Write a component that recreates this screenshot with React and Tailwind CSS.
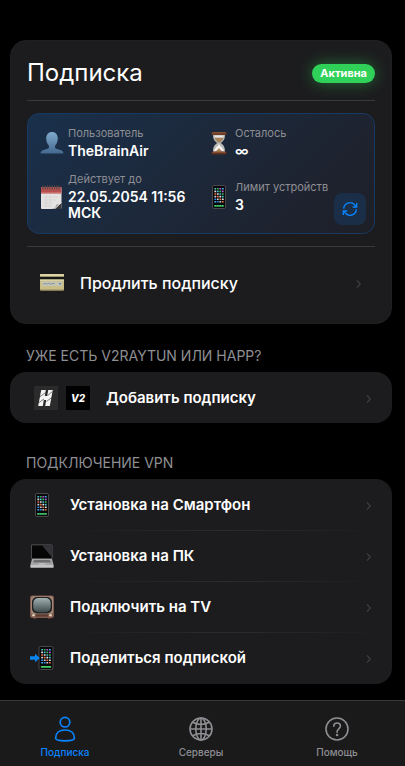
// App.jsx
import React, { useState } from "react";

const UserEmoji = () => (
	<svg viewBox="0 0 24 24" className="h-6 w-6">
		<defs>
			<linearGradient id="bust" x1="0" y1="0" x2="0" y2="1">
				<stop offset="0" stopColor="#7fa9cc" />
				<stop offset="1" stopColor="#45698f" />
			</linearGradient>
		</defs>
		<path
			d="M12 1c3.600 0 5.800 2.700 5.800 6.600 0 2.900-1.100 5.500-2.700 7v1.600c0 1 .8 1.500 2 1.900l4 1.200c1.500.5 2.300 1.500 2.300 3.200H.6c0-1.700.8-2.700 2.300-3.200l4-1.200c1.200-.4 2-.9 2-1.900v-1.600c-1.600-1.500-2.700-4.100-2.700-7C6.200 3.700 8.400 1 12 1z"
			fill="url(#bust)"
		/>
	</svg>
);

const CalendarEmoji = () => (
	<svg viewBox="0 0 24 24" className="h-6 w-6">
		<rect x="1" y="2" width="20.500" height="22" rx="1" fill="#e4e3e1" />
		<rect x="1" y="2" width="20.500" height="6.500" fill="#b5504f" />
		<path d="M1 8h20.500" stroke="#d98a88" strokeWidth="1" />
		<path d="M3 0.500v4M5.300 0.500v4M7.600 0.500v4M9.900 0.500v4M12.200 0.500v4M14.500 0.500v4M16.800 0.500v4M19 0.500v4" stroke="#5b4a4a" strokeWidth="1.100" />
		<path d="M4 12h14M4 15h12M4 18h9M4 21h8M6 10v12M10 10v12" stroke="#d2d0ce" strokeWidth="0.6" />
		<path d="M12 24c3-1 4-2 4.500-4.500 2 .2 3.500-.5 5-2.500L14 24z" fill="#8d8d90" />
		<path d="M14.500 24l7-6.500V24z" fill="#3a3a3d" />
		<path d="M14.500 24l7-6.500" stroke="#f5f5f5" strokeWidth="0.800" />
	</svg>
);

const HourglassEmoji = () => (
	<svg viewBox="0 0 24 24" className="h-6 w-6">
		<path d="M6 3.500h12c0 4.500-1 6.200-4.300 8.500 3.300 2.300 4.300 4.300 4.300 9H6c0-4.700 1-6.700 4.300-9C7 9.700 6 8 6 3.500z" fill="#b8b7b4" />
		<path d="M7.500 6.500h9c-.6 2.500-2.200 3.800-4.500 5.200-2.300-1.400-3.900-2.700-4.500-5.200z" fill="#a5825a" />
		<path d="M7.500 4.500h9v2h-9z" fill="#e8e7e4" />
		<path d="M12 12.500c.8 3.500 4.600 4 5 8H7c.4-4 4.200-4.500 5-8z" fill="#f4f3f1" />
		<path d="M12 17c.8 1.600 2.800 2.400 3.200 3.500H8.800C9.200 19.400 11.200 18.600 12 17z" fill="#b28353" />
		<rect x="4.500" y="1" width="15" height="3" rx="1" fill="#6b3a24" />
		<rect x="4.500" y="20.500" width="15" height="3" rx="1" fill="#5e3020" />
		<path d="M5.500 1.800h13M5.500 21.300h13" stroke="#a5673f" strokeWidth="0.7" />
	</svg>
);

const PHONE_COLORS = ["#45c1c9", "#d0d0d4", "#b05ad8", "#e5e5e8", "#2f8ff0", "#46b560", "#e8703f", "#4ab0f0"];

const PhoneDots = ({ x, y, cols, rows, dx, dy }) => {
	const dots = [];
	for (let r = 0; r < rows; r++) {
		for (let c = 0; c < cols; c++) {
			dots.push(
				<rect key={`${r}-${c}`} x={x + c * dx} y={y + r * dy} width="1.8" height="1.6" rx="0.3" fill={PHONE_COLORS[(r * 3 + c * 5) % 8]} />
			);
		}
	}
	return <g>{dots}</g>;
};

const PhoneEmoji = () => (
	<svg viewBox="0 0 24 24" className="h-6 w-6">
		<rect x="5.500" y="0.500" width="13" height="23" rx="1.500" fill="#09090b" stroke="#48484b" strokeWidth="1" />
		<PhoneDots x={7.400} y={3} cols={4} rows={6} dx={2.500} dy={2.600} />
		<rect x="7.200" y="20" width="9.600" height="1.700" rx="0.5" fill="#42cf68" />
		<path d="M14.500 20v1.700M12 20v1.700M9.600 20v1.700" stroke="#1d5b50" strokeWidth="0.5" />
	</svg>
);

const SharePhoneEmoji = () => (
	<svg viewBox="0 0 24 24" className="h-6 w-6">
		<rect x="9" y="0.500" width="14" height="23" rx="1.500" fill="#09090b" stroke="#48484b" strokeWidth="1" />
		<PhoneDots x={11.200} y={3} cols={4} rows={6} dx={2.600} dy={2.600} />
		<rect x="10.800" y="20" width="10.400" height="1.700" rx="0.5" fill="#42cf68" />
		<path d="M0 10.200h5V7.800L9.800 12 5 16.200v-2.400H0z" fill="#0a84ee" />
	</svg>
);

const CardEmoji = () => (
	<svg viewBox="0 0 24 24" className="h-6 w-6">
		<rect x="0" y="3" width="24" height="16.500" rx="1" fill="#c9be88" />
		<rect x="0" y="3" width="24" height="3" rx="1" fill="#dcd2a2" />
		<rect x="0" y="5.700" width="24" height="2.800" fill="#161614" />
		<path d="M0 8.500h24v1.200H0z" fill="#e0d8b0" />
		<rect x="2" y="10.500" width="20" height="4.500" fill="#c6c5b0" />
		<path d="M3 13.200l2-.8 2 .8 2-1 2 1 2-.8 2 .5" stroke="#8299b5" strokeWidth="1" fill="none" />
		<path d="M18.500 12h3l-1.500 2z" fill="#5f82bd" />
		<path d="M0 18.800h24" stroke="#a39965" strokeWidth="1" />
	</svg>
);

const LaptopEmoji = () => (
	<svg viewBox="0 0 24 24" className="h-6 w-6">
		<rect x="1" y="0.500" width="21.500" height="14.500" rx="1" fill="#5c5c5f" />
		<rect x="1.800" y="1.300" width="19.900" height="12.900" fill="#060607" />
		<path d="M12 1.300h9.700V13z" fill="#343438" />
		<path d="M2 15h20l1.700 6H.3z" fill="#a4a4a6" />
		<path d="M4 16h16l.8 2.500H3.200z" fill="#6c6c6f" />
		<path d="M9 19h6l.5 1.800h-7z" fill="#bcbcbe" />
		<rect x="0.300" y="21" width="23.400" height="2.800" rx="0.800" fill="#c4c4c6" />
	</svg>
);

const TvEmoji = () => (
	<svg viewBox="0 0 24 24" className="h-6 w-6">
		<defs>
			<linearGradient id="tvScreen" x1="0" y1="0" x2="0" y2="1">
				<stop offset="0" stopColor="#a1b0b0" />
				<stop offset="1" stopColor="#3e4b4d" />
			</linearGradient>
		</defs>
		<path d="M3 21h4l-1 3H3.500zM17 21h4l-.5 3H18z" fill="#5b392e" />
		<rect x="0" y="0.500" width="24" height="22.500" rx="2.200" fill="#80594d" />
		<rect x="1" y="1.300" width="22" height="17.700" rx="2" fill="#a08677" />
		<rect x="2" y="2" width="20" height="16.500" rx="5" fill="#20201f" />
		<rect x="3.300" y="3" width="17.400" height="14.300" rx="5" fill="url(#tvScreen)" />
		<rect x="6" y="19.500" width="12" height="2" fill="#5a3c33" />
		<circle cx="3.500" cy="20.300" r="1.300" fill="#e1d2b8" />
		<circle cx="20.500" cy="20.300" r="1.300" fill="#e1d2b8" />
	</svg>
);

const HappLogo = () => (
	<svg viewBox="0 0 24 24" className="h-6 w-6">
		<rect width="24" height="24" fill="#2b2b2c" />
		<path d="M7.200 4h4.600l-1 6h2.400l1-6h4.600l-3 16h-4.600l1-6H9.800l-1 6H4.200z" fill="#f4f4f4" />
		<path d="M5 11.500l6.500-5M5 16.500l5-3.500M12.500 15.500l6-4.500M13.500 9.500l5-4" stroke="#2b2b2c" strokeWidth="0.600" />
	</svg>
);

const V2Logo = () => (
	<svg viewBox="0 0 24 24" className="h-6 w-6">
		<rect width="24" height="24" fill="#000" />
		<text x="12" y="16" textAnchor="middle" fill="#fff" fontSize="10" fontWeight="800" fontStyle="italic" fontFamily="Inter, sans-serif">
			V2
		</text>
	</svg>
);

const RefreshIcon = () => (
	<svg viewBox="0 0 24 24" className="h-4 w-4" fill="none" stroke="currentColor" strokeWidth="2">
		<path d="M22 3v6h-6M2 21v-6h6" />
		<path d="M2.500 11.500A9.500 9.500 0 0 1 18.800 5.500L22 9M21.500 12.500A9.500 9.500 0 0 1 5.200 18.500L2 15" />
	</svg>
);

const Chevron = () => (
	<svg viewBox="0 0 6 10" className="mt-0.5 h-2.5 w-1.5" fill="none" stroke="#3f3f41" strokeWidth="1.200">
		<path d="M1 1.300l3.300 3.700L1 8.700" />
	</svg>
);

const PersonIcon = () => (
	<svg viewBox="0 0 28 28" className="h-7 w-7" fill="none" stroke="currentColor" strokeWidth="1.700">
		<circle cx="14" cy="7.200" r="4.800" />
		<path d="M4.600 23.300C4.600 18.200 8.200 15 14 15s9.400 3.200 9.400 8.300c0 1.600-3.800 2.500-9.400 2.500s-9.400-.9-9.400-2.500z" />
	</svg>
);

const GlobeIcon = () => (
	<svg viewBox="0 0 28 28" className="h-7 w-7" fill="none" stroke="currentColor" strokeWidth="1.600">
		<circle cx="14" cy="14" r="11" />
		<ellipse cx="14" cy="14" rx="5.200" ry="11" />
		<path d="M14 3v22M3 14h22M5.800 7.300c4.800 3 11.600 3 16.400 0M5.800 20.700c4.800-3 11.600-3 16.400 0" />
	</svg>
);

const HelpIcon = () => (
	<svg viewBox="0 0 28 28" className="h-7 w-7" fill="none" stroke="currentColor" strokeWidth="1.600">
		<circle cx="14" cy="14" r="11" />
		<path d="M10.800 11.200c0-2 1.300-3.200 3.300-3.200s3.300 1.200 3.300 3c0 2.700-3.300 2.900-3.300 5.600v.6" strokeLinecap="round" />
		<circle cx="14.100" cy="20" r="0.500" fill="currentColor" />
	</svg>
);

const InfoItem = ({ icon, label, value }) => (
	<div className="flex items-center gap-1">
		<div className="shrink-0">{icon}</div>
		<dl className="min-w-0">
			<dt className="whitespace-nowrap text-[11px] leading-[15px] text-[#8e8e93]">{label}</dt>
			<dd className="mt-0.5 text-[14px] leading-4 font-semibold text-white">{value}</dd>
		</dl>
	</div>
);

const SectionTitle = ({ children }) => (
	<h2 className="mb-1.5 px-4 text-[14px] leading-5 text-[#8e8e93] uppercase">{children}</h2>
);

const INSTALL_ITEMS = [
	{ icon: <PhoneEmoji />, label: "Установка на Смартфон" },
	{ icon: <LaptopEmoji />, label: "Установка на ПК" },
	{ icon: <TvEmoji />, label: "Подключить на TV" },
	{ icon: <SharePhoneEmoji />, label: "Поделиться подпиской" },
];

const TABS = [
	{ id: "subscription", label: "Подписка", icon: <PersonIcon /> },
	{ id: "servers", label: "Серверы", icon: <GlobeIcon /> },
	{ id: "help", label: "Помощь", icon: <HelpIcon /> },
];

const App = () => {
	const [tab, setTab] = useState("subscription");

	return (
		<div className="flex min-h-screen flex-col bg-black font-['Inter',sans-serif] text-white">
			<main className="flex-1 pt-10 pr-[13px] pb-4 pl-2.5">
				<section className="rounded-2xl border border-[#1f1f20] bg-[#1c1c1e] p-4">
					<header className="flex items-center justify-between border-b border-[#3a3a3c] pb-[11px]">
						<h1 className="text-[24px] leading-8">Подписка</h1>
						<span className="rounded-full bg-[#30d158] px-2 text-[11px] leading-[19px] font-bold shadow-[0_0_16px_rgba(48,209,88,0.45)]">
							Активна
						</span>
					</header>

					<div className="relative my-3 grid grid-cols-2 gap-x-3 gap-y-[13px] rounded-xl border border-[#163a61] bg-linear-135 from-[#19304b] to-[#1e1f27] p-3">
						<InfoItem icon={<UserEmoji />} label="Пользователь" value="TheBrainAir" />
						<InfoItem icon={<HourglassEmoji />} label="Осталось" value="∞" />
						<InfoItem icon={<CalendarEmoji />} label="Действует до" value="22.05.2054 11:56 МСК" />
						<InfoItem icon={<PhoneEmoji />} label="Лимит устройств" value="3" />
						<button
							type="button"
							aria-label="Обновить"
							className="absolute right-2 bottom-2 flex h-8 w-8 items-center justify-center rounded-lg bg-[#1a2e47] text-[#0a84ff]"
						>
							<RefreshIcon />
						</button>
					</div>

					<div className="border-t border-[#3a3a3c] pt-3">
						<button type="button" className="flex h-12 w-full items-center gap-4 px-[13px] text-left">
							<CardEmoji />
							<span className="flex-1 text-[16px] leading-6 font-medium">Продлить подписку</span>
							<Chevron />
						</button>
					</div>
				</section>

				<section className="mt-[22px]">
					<SectionTitle>Уже есть V2rayTun или Happ?</SectionTitle>
					<button type="button" className="flex h-[51px] w-full items-center rounded-2xl bg-[#1c1c1e] pr-5 pl-6 text-left">
						<span className="mr-4 flex gap-2">
							<HappLogo />
							<V2Logo />
						</span>
						<span className="flex-1 text-[15px] leading-6 font-semibold">Добавить подписку</span>
						<Chevron />
					</button>
				</section>

				<section className="mt-[30px]">
					<SectionTitle>Подключение VPN</SectionTitle>
					<ul className="rounded-2xl bg-[#1c1c1e] py-px">
						{INSTALL_ITEMS.map((item, i) => (
							<li key={item.label}>
								{i > 0 && (
									<div className="mr-2 ml-[60px] h-px bg-linear-to-r from-transparent via-[#2c2c2e] to-transparent" />
								)}
								<button type="button" className="flex h-[50px] w-full items-center gap-4 px-5 text-left">
									{item.icon}
									<span className="flex-1 text-[15px] leading-6 font-semibold">{item.label}</span>
									<Chevron />
								</button>
							</li>
						))}
					</ul>
				</section>
			</main>

			<nav className="grid grid-cols-3 gap-1.5 border-t border-[#38383a] bg-[#1a1a1a] pt-3.5 pr-[3px] pb-1.5">
				{TABS.map((t) => (
					<button
						key={t.id}
						type="button"
						onClick={() => setTab(t.id)}
						className={`flex flex-col items-center gap-0.5 text-[10px] leading-[15px] font-medium ${tab === t.id ? "text-[#0a84ff]" : "text-[#8e8e93]"}`}
					>
						{t.icon}
						{t.label}
					</button>
				))}
			</nav>
		</div>
	);
};

export default App;
